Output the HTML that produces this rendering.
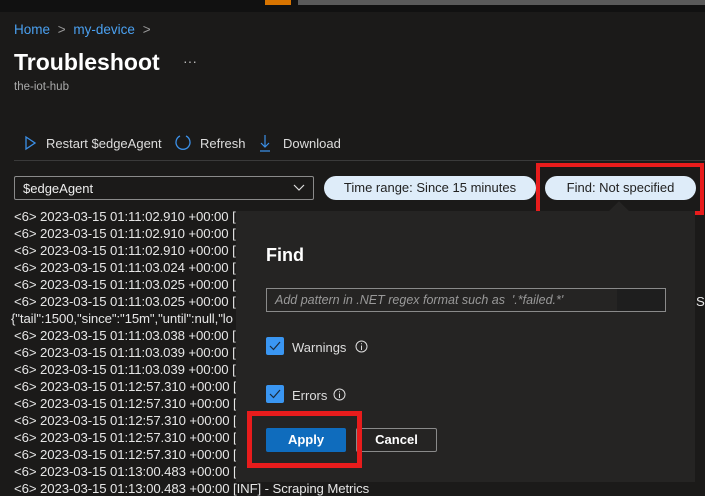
<!DOCTYPE html>
<html><head><style>
*{margin:0;padding:0;box-sizing:border-box}
body{width:705px;height:496px;background:#1b1a19;font-family:"Liberation Sans",sans-serif;color:#fff;position:relative;overflow:hidden}
.a{position:absolute;white-space:nowrap}
.log{position:absolute;left:14px;font-size:13.2px;color:#e6e6e6;letter-spacing:-0.1px}
</style></head><body>
<div class="a" style="left:0;top:0;width:705px;height:12px;background:#111"></div>
<div class="a" style="left:265px;top:0;width:26px;height:5px;background:#d87400"></div>
<div class="a" style="left:298px;top:0;width:407px;height:5px;background:#5a5a5a"></div>
<div class="a" style="left:14px;top:22px;font-size:13.5px;color:#4aa0f0">Home <span style="color:#999;margin:0 4px">&gt;</span> my-device <span style="color:#999;margin-left:4px">&gt;</span></div>
<div class="a" style="left:14px;top:49px;font-size:23px;font-weight:bold">Troubleshoot</div>
<div class="a" style="left:183px;top:53px;font-size:14px;color:#bbb">···</div>
<div class="a" style="left:14px;top:81px;font-size:11.5px;color:#aaa">the-iot-hub</div>
<svg class="a" style="left:24px;top:135px" width="12" height="16"><path d="M2 2 L11 8 L2 14 Z" fill="none" stroke="#3b8fe6" stroke-width="1.3"/></svg>
<div class="a" style="left:46px;top:136px;font-size:13px;color:#ddd">Restart $edgeAgent</div>
<svg class="a" style="left:174px;top:133px" width="18" height="18"><path d="M6 3 A7 7 0 1 0 12 3" fill="none" stroke="#3b8fe6" stroke-width="1.3"/></svg>
<div class="a" style="left:200px;top:136px;font-size:13px;color:#ddd">Refresh</div>
<svg class="a" style="left:259px;top:134px" width="12" height="18"><path d="M6 1 V13 M2 9 L6 13 L10 9 M1 17 H11" fill="none" stroke="#3b8fe6" stroke-width="1.2"/></svg>
<div class="a" style="left:283px;top:136px;font-size:13px;color:#ddd">Download</div>
<div class="a" style="left:14px;top:160px;width:691px;height:1px;background:#3a3a3a"></div>
<div class="a" style="left:14px;top:176px;width:300px;height:24px;border:1px solid #8a8a8a;border-radius:2px;background:#1b1a19"></div>
<div class="a" style="left:23px;top:181px;font-size:13px;color:#eee">$edgeAgent</div>
<svg class="a" style="left:293px;top:184px" width="12" height="8"><path d="M1 1 L6 6 L11 1" fill="none" stroke="#ddd" stroke-width="1.2"/></svg>
<div class="a" style="left:324px;top:176px;width:212px;height:24px;border-radius:12px;background:#deecf9;color:#222;font-size:13px;text-align:center;line-height:24px">Time range: Since 15 minutes</div>
<div class="a" style="left:545px;top:176px;width:151px;height:24px;border-radius:12px;background:#deecf9;color:#222;font-size:13px;text-align:center;line-height:24px">Find: Not specified</div>
<div class="a" style="left:536px;top:163px;width:168px;height:52px;border:4px solid #e81c1c"></div>
<div class="log" style="top:209px">&lt;6&gt; 2023-03-15 01:11:02.910 +00:00 [</div>
<div class="log" style="top:226px">&lt;6&gt; 2023-03-15 01:11:02.910 +00:00 [</div>
<div class="log" style="top:243px">&lt;6&gt; 2023-03-15 01:11:02.910 +00:00 [</div>
<div class="log" style="top:260px">&lt;6&gt; 2023-03-15 01:11:03.024 +00:00 [</div>
<div class="log" style="top:277px">&lt;6&gt; 2023-03-15 01:11:03.025 +00:00 [</div>
<div class="log" style="top:294px">&lt;6&gt; 2023-03-15 01:11:03.025 +00:00 [</div>
<div class="log" style="top:311px;left:11px">{"tail":1500,"since":"15m","until":null,"lo</div>
<div class="log" style="top:328px">&lt;6&gt; 2023-03-15 01:11:03.038 +00:00 [</div>
<div class="log" style="top:345px">&lt;6&gt; 2023-03-15 01:11:03.039 +00:00 [</div>
<div class="log" style="top:362px">&lt;6&gt; 2023-03-15 01:11:03.039 +00:00 [</div>
<div class="log" style="top:379px">&lt;6&gt; 2023-03-15 01:12:57.310 +00:00 [</div>
<div class="log" style="top:396px">&lt;6&gt; 2023-03-15 01:12:57.310 +00:00 [</div>
<div class="log" style="top:413px">&lt;6&gt; 2023-03-15 01:12:57.310 +00:00 [</div>
<div class="log" style="top:430px">&lt;6&gt; 2023-03-15 01:12:57.310 +00:00 [</div>
<div class="log" style="top:447px">&lt;6&gt; 2023-03-15 01:12:57.310 +00:00 [</div>
<div class="log" style="top:464px">&lt;6&gt; 2023-03-15 01:13:00.483 +00:00 [</div>
<div class="log" style="top:481px">&lt;6&gt; 2023-03-15 01:13:00.483 +00:00 [INF] - Scraping Metrics</div>
<div class="log" style="top:294px;left:696px">Si</div>
<div class="a" style="left:236px;top:211px;width:459px;height:271px;background:#252423"></div>
<div class="a" style="left:612px;top:204px;width:14px;height:14px;background:#252423;transform:rotate(45deg)"></div>
<div class="a" style="left:266px;top:245px;font-size:18px;font-weight:bold">Find</div>
<div class="a" style="left:266px;top:288px;width:400px;height:24px;border:1px solid #8a8a8a;background:#252423"></div>
<div class="a" style="left:617px;top:289px;width:48px;height:22px;background:#1e1e1e"></div>
<div class="a" style="left:275px;top:293px;font-size:12.5px;font-style:italic;color:#999">Add pattern in .NET regex format such as &nbsp;'.*failed.*'</div>
<div class="a" style="left:266px;top:337px;width:18px;height:18px;background:#3a96f2;border-radius:2px"></div>
<svg class="a" style="left:268px;top:340px" width="14" height="12"><path d="M2 6 L5.5 9.5 L12 2" fill="none" stroke="#1b2a3a" stroke-width="1.2"/></svg>
<div class="a" style="left:292px;top:340px;font-size:13px;color:#ddd">Warnings</div>
<svg class="a" style="left:355px;top:340px" width="13" height="13"><circle cx="6.5" cy="6.5" r="5.5" fill="none" stroke="#ddd"/><path d="M6.5 5.5 V10 M6.5 3.3 V4.3" stroke="#ddd"/></svg>
<div class="a" style="left:266px;top:385px;width:18px;height:18px;background:#3a96f2;border-radius:2px"></div>
<svg class="a" style="left:268px;top:388px" width="14" height="12"><path d="M2 6 L5.5 9.5 L12 2" fill="none" stroke="#1b2a3a" stroke-width="1.2"/></svg>
<div class="a" style="left:292px;top:388px;font-size:13px;color:#ddd">Errors</div>
<svg class="a" style="left:333px;top:388px" width="13" height="13"><circle cx="6.5" cy="6.5" r="5.5" fill="none" stroke="#ddd"/><path d="M6.5 5.5 V10 M6.5 3.3 V4.3" stroke="#ddd"/></svg>
<div class="a" style="left:266px;top:428px;width:80px;height:24px;background:#0f6cbd;border-radius:2px;font-size:13px;font-weight:bold;text-align:center;line-height:24px">Apply</div>
<div class="a" style="left:356px;top:428px;width:81px;height:24px;border:1px solid #8a8a8a;border-radius:2px;font-size:13px;font-weight:bold;text-align:center;line-height:22px">Cancel</div>
<div class="a" style="left:247px;top:411px;width:115px;height:57px;border:5px solid #e81c1c"></div>
</body></html>
